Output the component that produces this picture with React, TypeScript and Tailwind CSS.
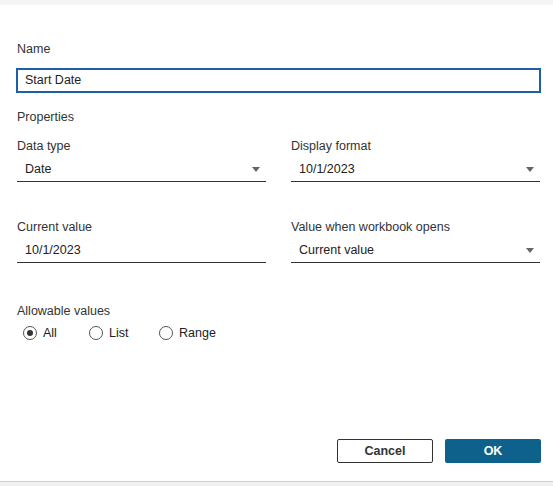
import React from "react";

const Arrow = () => (
  <svg width="8" height="5" viewBox="0 0 8 5" className="shrink-0">
    <path d="M0 0 H8 L4 5 Z" fill="#666" />
  </svg>
);

const Select = ({ value }: { value: string }) => (
  <div className="flex h-[25px] items-center justify-between border-b border-[#333] pl-[8px] pr-[6px] text-[12.5px] text-[#222]">
    <span>{value}</span>
    <Arrow />
  </div>
);

const Radio = ({ label, checked }: { label: string; checked?: boolean }) => (
  <label className="flex items-center gap-[6px]">
    <span className="flex h-[14px] w-[14px] items-center justify-center rounded-full border border-[#555] bg-white">
      {checked && <span className="h-[6px] w-[6px] rounded-full bg-[#333]" />}
    </span>
    <span>{label}</span>
  </label>
);

export default function App() {
  return (
    <div
      className="flex h-[486px] w-[553px] flex-col bg-white text-[#333]"
      style={{ fontFamily: '"Liberation Sans", Arial, sans-serif' }}
    >
      <div className="h-[5px] bg-[#f5f5f5]" />
      <div className="flex flex-1 flex-col pl-[17px] pr-[12px] pt-[36px] text-[12.5px]">
        <div className="h-[16px] leading-[16px]">Name</div>
        <div className="-ml-[1px] mt-[11px] flex h-[25px] items-center border-2 border-[#1d5fa8] pl-[7px] text-[12.5px] text-[#222]">
          Start Date
        </div>
        <div className="mt-[16px] h-[16px] leading-[16px]">Properties</div>
        <div className="mt-[13px] grid grid-cols-2 gap-x-[25px] pr-[1px]">
          <div>
            <div className="h-[16px] leading-[16px]">Data type</div>
            <div className="mt-[3px]">
              <Select value="Date" />
            </div>
          </div>
          <div>
            <div className="h-[16px] leading-[16px]">Display format</div>
            <div className="mt-[3px]">
              <Select value="10/1/2023" />
            </div>
          </div>
          <div className="mt-[37px]">
            <div className="h-[16px] leading-[16px]">Current value</div>
            <div className="mt-[3px] flex h-[25px] items-center border-b border-[#333] pl-[8px] text-[12.5px] text-[#222]">
              10/1/2023
            </div>
          </div>
          <div className="mt-[37px]">
            <div className="h-[16px] leading-[16px]">Value when workbook opens</div>
            <div className="mt-[3px]">
              <Select value="Current value" />
            </div>
          </div>
        </div>
        <div className="mt-[40px] h-[16px] leading-[16px]">Allowable values</div>
        <div className="ml-[6px] mt-[6px] flex h-[16px] items-center text-[12.5px] text-[#222]">
          <div className="w-[66px]">
            <Radio label="All" checked />
          </div>
          <div className="w-[70px]">
            <Radio label="List" />
          </div>
          <Radio label="Range" />
        </div>
        <div className="flex-1" />
        <div className="mb-[18px] flex justify-end gap-[12px]">
          <button className="h-[24px] w-[96px] rounded-[2px] border border-[#333] bg-white text-[12.5px] font-bold text-[#333]">
            Cancel
          </button>
          <button className="h-[24px] w-[96px] rounded-[2px] bg-[#0d618a] text-[12.5px] font-bold text-white">
            OK
          </button>
        </div>
      </div>
      <div className="h-[5px] border-t border-[#cfcfcf] bg-[#f0f0f0]" />
    </div>
  );
}
